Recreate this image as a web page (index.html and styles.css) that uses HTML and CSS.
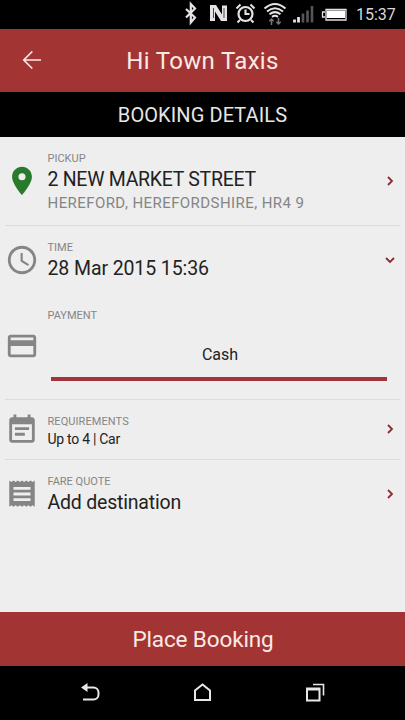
FILE: index.html
```
<!DOCTYPE html>
<html lang="en">
<head>
<meta charset="utf-8">
<title>Hi Town Taxis</title>
<link rel="stylesheet" href="styles.css">
</head>
<body>
<div class="status">
  <svg class="status-icons" viewBox="170 0 180 29" width="180" height="29" fill="none" stroke="#e4e4e4">
    <path d="M186 9l9 8.500-4.200 5V4l4.200 4.500-9 9" stroke-width="2.200"/>
    <path d="M210 5h6l6 9.500V5.500h5V21h-6l-6-9.500V21h-5z" fill="#e4e4e4" stroke="none"/>
    <path d="M213.500 8v10M224 8v10" stroke="#222" stroke-width="0.800"/>
    <circle cx="245.500" cy="14" r="7" stroke-width="2.200"/>
    <path d="M245.500 9.500V14h4M236.500 8.500l4-4M250.500 4.500l4 4M240 20l-2.500 2.500M251 20l2.500 2.500" stroke-width="2.100"/>
    <path d="M264.500 8.500q10.500-9 21 0M267 11.500q8-6.500 16 0M269.500 14.300q5.500-4.400 11 0M272 16.800q3-2 6 0" stroke-width="2"/>
    <path d="M271.500 25v-6M269.300 21.300l2.200-2.300 2.200 2.300M278.500 18v6M276.300 21.700l2.200 2.300 2.200-2.300" stroke="#777" stroke-width="1.500"/>
    <path d="M294.500 22.500v-3M298.500 22.500v-5.500" stroke-width="2.800"/>
    <path d="M303 22.500v-9M307.500 22.500v-12M312 22.500V6" stroke="#555" stroke-width="2.600"/>
    <path d="M326 9.500h20v10.500h-20zM325 12h-2.500v5h2.500" stroke-width="1.300"/>
    <path d="M326.800 10.500h18.200v7.500h-18.200z" fill="#fff" stroke="none"/>
  </svg>
  <span class="clock">15:37</span>
</div>
<header class="header">
  <svg class="back" viewBox="0 0 20 20" width="20" height="20" fill="none" stroke="#fbe9e5" stroke-width="1.700"><path d="M19 9H2M10.300 .5L1.800 9l8.500 8.500"/></svg>
  <h1 class="title">Hi Town Taxis</h1>
</header>
<h2 class="subhead"><span>BOOKING DETAILS</span></h2>
<main class="list">
  <section class="row pickup">
    <svg class="icon green" viewBox="0 0 24 24"><path d="M12 2C8.130 2 5 5.130 5 9c0 5.250 7 13 7 13s7-7.750 7-13c0-3.870-3.130-7-7-7zm0 9.500a2.500 2.500 0 1 1 0-5 2.500 2.500 0 0 1 0 5z"/></svg>
    <div class="text">
      <div class="label l-pickup">PICKUP</div>
      <div class="value v-street">2 NEW MARKET STREET</div>
      <div class="sub">HEREFORD, HEREFORDSHIRE, HR4 9</div>
    </div>
    <svg class="chev" viewBox="0 0 10 10"><path d="M3 1l4 4-4 4"/></svg>
  </section>
  <section class="row time">
    <svg class="icon" viewBox="0 0 24 24"><path d="M11.990 2C6.470 2 2 6.480 2 12s4.470 10 9.990 10C17.520 22 22 17.520 22 12S17.520 2 11.990 2zM12 20c-4.420 0-8-3.580-8-8s3.580-8 8-8 8 3.580 8 8-3.580 8-8 8zm.5-13H11v6l5.250 3.150.75-1.230-4.500-2.670z"/></svg>
    <div class="text">
      <div class="label l-time">TIME</div>
      <div class="value v-date">28 Mar 2015 15:36</div>
    </div>
    <svg class="chev" viewBox="0 0 10 10"><path d="M1 3l4 4 4-4"/></svg>
  </section>
  <section class="row payment">
    <svg class="icon" viewBox="0 0 24 24"><path d="M20 4H4c-1.110 0-1.990.89-1.990 2L2 18c0 1.110.89 2 2 2h16c1.110 0 2-.89 2-2V6c0-1.110-.89-2-2-2zm0 14H4v-6h16v6zm0-10H4V6h16v2z"/></svg>
    <div class="text">
      <div class="label l-payment">PAYMENT</div>
      <div class="tab"><span>Cash</span></div>
    </div>
  </section>
  <section class="row requirements">
    <svg class="icon" viewBox="0 0 24 24"><path d="M17 10H7v2h10v-2zm2-7h-1V1h-2v2H8V1H6v2H5c-1.110 0-1.990.9-1.990 2L3 19c0 1.100.89 2 2 2h14c1.100 0 2-.9 2-2V5c0-1.100-.9-2-2-2zm0 16H5V8h14v11zm-5-5H7v2h7v-2z"/></svg>
    <div class="text">
      <div class="label l-req">REQUIREMENTS</div>
      <div class="small">Up to 4 | Car</div>
    </div>
    <svg class="chev" viewBox="0 0 10 10"><path d="M3 1l4 4-4 4"/></svg>
  </section>
  <section class="row fare">
    <svg class="icon" viewBox="0 0 24 24"><path d="M18 17H6v-2h12v2zm0-4H6v-2h12v2zm0-4H6V7h12v2zM3 21l1.500-1L6 21l1.500-1L9 21l1.500-1L12 21l1.500-1L15 21l1.500-1L18 21l1.500-1L21 21V2.500l-1.500 1L18 2.500l-1.500 1L15 2.500l-1.500 1L12 2.500l-1.500 1L9 2.500l-1.500 1-1.500-1-1.500 1-1.500-1V21z"/></svg>
    <div class="text">
      <div class="label l-fare">FARE QUOTE</div>
      <div class="value v-dest">Add destination</div>
    </div>
    <svg class="chev" viewBox="0 0 10 10"><path d="M3 1l4 4-4 4"/></svg>
  </section>
</main>
<button class="place">Place Booking</button>
<nav class="nav">
  <svg viewBox="0 0 20 20" width="20" height="20"><path d="M5 4.500h8.500a5 5 0 0 1 5 5v2a5 5 0 0 1-5 5H3"/><path class="solid" d="M1 4.500L7.500 0v9z"/></svg>
  <svg viewBox="0 0 20 20" width="20" height="20"><path d="M2 17V7.500L9.500 1.500l7.500 6V17z"/></svg>
  <svg viewBox="0 0 20 20" width="20" height="20"><path d="M2 5.500h12.500v12H2zM2 6.500h12.500"/><path class="thin" d="M8 1.500h10.500v11"/></svg>
</nav>
</body>
</html>
```
FILE: styles.css
```
* { box-sizing: border-box; }
body {
  margin: 0;
  width: 405px;
  height: 720px;
  display: flex;
  flex-direction: column;
  overflow: hidden;
  background: #eeeeee;
  color: #222;
  font-family: Roboto, "Liberation Sans", sans-serif;
}
.status {
  height: 29px;
  background: #000;
  display: flex;
  padding-left: 170px;
}
.clock {
  margin-left: 6px;
  color: #d8d8d8;
  font-size: 16px;
  line-height: 30px;
}
.header {
  height: 63px;
  background: #a33434;
  display: grid;
  grid-template-columns: 20px 1fr 20px;
  align-items: center;
  padding: 0 22px;
}
.title {
  margin: 0;
  text-align: center;
  font-size: 24px;
  font-weight: 400;
  line-height: 61px;
  padding-top: 2px;
  letter-spacing: 0.330px;
  color: #fbe9e5;
}
.subhead {
  margin: 0;
  height: 45px;
  background: #000;
  color: #e6e6e6;
  text-align: center;
  font-size: 20px;
  font-weight: 400;
  line-height: 47px;
  letter-spacing: 0.100px;
}
.list { flex: 1; }
.row {
  display: grid;
  grid-template-columns: 34px 1fr 10px;
  padding: 14px 10px 0 4.500px;
}
.pickup, .payment, .requirements {
  background: linear-gradient(#dcdcdc, #dcdcdc) 5px 100% / 395px 1.500px no-repeat;
}
.pickup { height: 89px; }
.time { height: 69px; }
.payment { height: 105px; grid-template-columns: 34px 1fr; padding-right: 18px; }
.requirements { height: 60px; }
.fare { height: 60px; }
.icon { width: 34px; height: 34px; fill: #858585; margin-top: 13px; }
.icon.green { fill: #2a7a2c; }
.time .icon { margin-top: 3px; }
.payment .icon { margin-top: 20px; }
.requirements .icon { margin-top: -1px; }
.fare .icon { margin-top: 3px; }
.text { padding-left: 9px; white-space: nowrap; }
.chev {
  width: 10px;
  height: 10px;
  margin-top: 25px;
  fill: none;
  stroke: #8a2c34;
  stroke-width: 1.800;
}
.time .chev { margin-top: 15px; }
.requirements .chev { margin-top: 10px; }
.fare .chev { margin-top: 15px; }
.label { font-size: 11px; line-height: 14px; color: #858585; }
.l-pickup, .l-time, .l-fare { padding-top: 1px; }
.value { margin-top: 2px; font-size: 19.500px; line-height: 24px; }
.v-street { letter-spacing: -0.280px; }
.v-date { letter-spacing: -0.100px; }
.v-dest { letter-spacing: -0.200px; }
.l-req { letter-spacing: 0.080px; padding-top: 0.500px; }
.sub { margin-top: 2px; font-size: 15px; line-height: 18px; letter-spacing: 0.430px; color: #858585; }
.small { margin-top: 1.500px; font-size: 14px; line-height: 18px; letter-spacing: -0.280px; }
.tab {
  margin: 22px 0 0 3.500px;
  padding-bottom: 12px;
  border-bottom: 4px solid #a0363b;
  text-align: center;
  text-indent: 2px;
  font-size: 16px;
  line-height: 20px;
}
.place {
  height: 54px;
  border: 0;
  padding: 1px 0 0 1px;
  background: #a33434;
  color: #fbe9e5;
  font: 400 22.500px/53px Roboto, "Liberation Sans", sans-serif;
  letter-spacing: -0.130px;
}
.nav {
  height: 54px;
  background: #000;
  display: flex;
  justify-content: space-between;
  align-items: center;
  padding: 0 80px;
}
.nav svg { fill: none; stroke: #e8e8e8; stroke-width: 2; }
.nav .solid { fill: #e8e8e8; stroke: none; }
.nav .thin { stroke-width: 1.600; }
```
